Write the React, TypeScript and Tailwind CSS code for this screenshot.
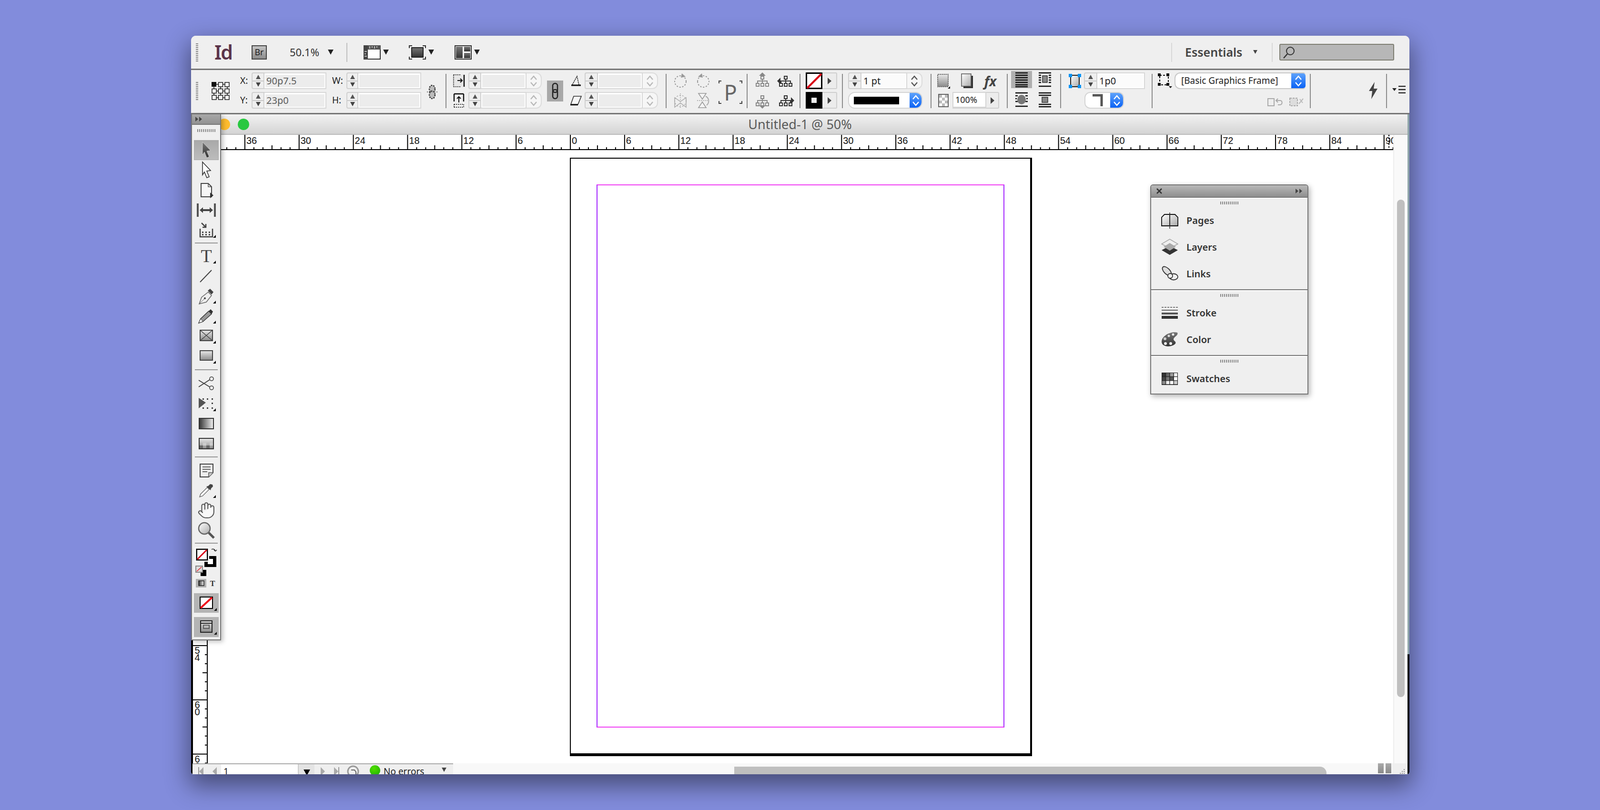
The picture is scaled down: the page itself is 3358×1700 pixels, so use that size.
import { Hand } from 'lucide-react';
import type { ReactNode } from 'react';

const grip = "bg-[repeating-linear-gradient(90deg,#8a8a8a_0_2px,transparent_2px_4px)]";
const gripV = "bg-[repeating-linear-gradient(180deg,#8a8a8a_0_2px,transparent_2px_4px)]";
const step = 113.85;

function Defs() {
  return (
    <svg className="absolute h-0 w-0">
      <defs>
        <linearGradient id="gv" x1="0" y1="0" x2="0" y2="1">
          <stop offset="0" stopColor="#e8e8e8" />
          <stop offset="1" stopColor="#8a8a8a" />
        </linearGradient>
        <linearGradient id="gd" x1="0" y1="0" x2="0" y2="1">
          <stop offset="0" stopColor="#777" />
          <stop offset="1" stopColor="#333" />
        </linearGradient>
        <linearGradient id="gh" x1="0" y1="0" x2="1" y2="0">
          <stop offset="0" stopColor="#333" />
          <stop offset="1" stopColor="#f4f4f4" />
        </linearGradient>
        <linearGradient id="gw" x1="0" y1="0" x2="1" y2="1">
          <stop offset="0" stopColor="#fff" />
          <stop offset="1" stopColor="#aaa" />
        </linearGradient>
      </defs>
    </svg>
  );
}

const Cnr = () => <path d="M42 30v6h-6z" fill="#111" />;

function ToolIcon({ children }: { children: ReactNode }) {
  return (
    <svg width="44" height="40" viewBox="0 0 44 40">
      {children}
    </svg>
  );
}

const arrowPath = "M14 3l17 18-8 1 5 12-5 2-5-12-4 6z";

const toolsA: ReactNode[] = [
  <ToolIcon><path d={arrowPath} fill="url(#gd)" stroke="#fff" strokeWidth=".5" /></ToolIcon>,
  <ToolIcon><path d={arrowPath} fill="#fff" stroke="#333" strokeWidth="1.6" /></ToolIcon>,
  <ToolIcon>
    <path d="M11 6h15l7 7v21H11z" fill="#f6f6f6" stroke="#444" strokeWidth="2" />
    <path d="M26 6v7h7" fill="none" stroke="#555" strokeWidth="1.5" />
    <path d="M30 25l7 6-7 6z" fill="#333" />
  </ToolIcon>,
  <ToolIcon>
    <rect x="2" y="6" width="4" height="28" fill="#555" />
    <rect x="38" y="6" width="4" height="28" fill="#555" />
    <path d="M8 20l7-6v4h14v-4l7 6-7 6v-4H15v4z" fill="#444" />
  </ToolIcon>,
  <ToolIcon>
    <path d="M9 17v17h26V17" fill="none" stroke="#444" strokeWidth="2.5" />
    <path d="M13 23h3v3h-3zM20 23h3v3h-3zM27 23h3v3h-3zM13 28h3v3h-3zM20 28h3v3h-3zM27 28h3v3h-3z" fill="#444" />
    <path d="M12 5l9 9m0-7v7h-7" fill="none" stroke="#444" strokeWidth="2.5" />
    <Cnr />
  </ToolIcon>,
];

const toolsB: ReactNode[] = [
  <ToolIcon>
    <text x="22" y="33" textAnchor="middle" fontFamily="'Liberation Serif', serif" fontSize="38" fill="#444">T</text>
    <Cnr />
  </ToolIcon>,
  <ToolIcon><path d="M9 33L33 8" stroke="#444" strokeWidth="2" /></ToolIcon>,
  <ToolIcon>
    <path d="M7 37l5-14 14-11 7 7-11 14z" fill="#eee" stroke="#666" strokeWidth="1.5" />
    <path d="M25 9l5-4 7 7-4 5z" fill="#444" />
    <path d="M7 37l11-11" stroke="#666" strokeWidth="1" />
    <circle cx="19" cy="25" r="2" fill="#444" />
    <Cnr />
  </ToolIcon>,
  <ToolIcon>
    <path d="M6 35l4-9 17-16 6 6-18 16z" fill="#999" stroke="#333" strokeWidth="1.4" />
    <path d="M6 35l4-9 5 6z" fill="#fff" stroke="#333" strokeWidth="1" />
    <path d="M27 10l4-4 5 5-3 5z" fill="#333" />
    <Cnr />
  </ToolIcon>,
  <ToolIcon>
    <rect x="9" y="8" width="26" height="22" fill="url(#gv)" stroke="#444" strokeWidth="2" />
    <path d="M9 8l26 22M35 8L9 30" stroke="#444" strokeWidth="1.5" />
    <Cnr />
  </ToolIcon>,
  <ToolIcon>
    <rect x="9" y="9" width="26" height="20" fill="url(#gv)" stroke="#444" strokeWidth="2" />
    <Cnr />
  </ToolIcon>,
];

const toolsC: ReactNode[] = [
  <ToolIcon>
    <circle cx="33" cy="10" r="4" fill="none" stroke="#444" strokeWidth="1.6" />
    <circle cx="33" cy="29" r="4" fill="none" stroke="#444" strokeWidth="1.6" />
    <path d="M29 12L6 27M29 27L6 13" stroke="#444" strokeWidth="2" />
  </ToolIcon>,
  <ToolIcon>
    <path d="M6 8l15 10L6 30z" fill="#555" />
    <path d="M14 9h3v3h-3zM23 9h3v3h-3zM33 9h3v3h-3zM33 18h3v3h-3zM33 28h3v3h-3zM23 28h3v3h-3zM14 28h3v3h-3z" fill="#444" />
    <Cnr />
  </ToolIcon>,
  <ToolIcon><rect x="7" y="9" width="30" height="22" fill="url(#gh)" stroke="#333" strokeWidth="2" /></ToolIcon>,
  <ToolIcon>
    <rect x="7" y="9" width="30" height="22" fill="url(#gv)" stroke="#333" strokeWidth="2" />
    <path d="M8 24h7v6H8zM22 24h7v6h-7z" fill="#666" />
    <path d="M15 18h7v6h-7zM29 18h7v6h-7z" fill="#ccc" />
  </ToolIcon>,
];

const toolsD: ReactNode[] = [
  <ToolIcon>
    <path d="M9 7h27v18l-9 9H9z" fill="#eee" stroke="#444" strokeWidth="2" />
    <path d="M14 13h17M14 18h17M14 23h10" stroke="#666" strokeWidth="1.8" />
    <path d="M27 34v-9h9" fill="#ccc" stroke="#555" strokeWidth="1.5" />
  </ToolIcon>,
  <ToolIcon>
    <path d="M8 34l2-6 14-14 4 4-14 14z" fill="#fff" stroke="#666" strokeWidth="1.4" />
    <path d="M22 12l4-1 4-4 5 1 1 4-4 4-1 4z" fill="#444" />
    <Cnr />
  </ToolIcon>,
  <Hand size={38} strokeWidth={1.3} color="#555" fill="#f8f8f8" />,
  <ToolIcon>
    <path d="M27 25l11 11" stroke="#555" strokeWidth="5" />
    <circle cx="18" cy="16" r="12" fill="url(#gw)" stroke="#666" strokeWidth="2.5" />
  </ToolIcon>,
];

function ToolRow({ children, active }: { children: ReactNode; active?: boolean }) {
  return (
    <div className={`mx-auto flex h-[42px] w-[52px] items-center justify-center ${active ? 'border border-[#aaa] bg-[linear-gradient(#a9a9a9,#bcbcbc)]' : ''}`}>
      {children}
    </div>
  );
}

const ToolSep = ({ h }: { h: string }) => (
  <div className={`flex items-center justify-center ${h}`}>
    <div className="h-[2px] w-[48px] bg-[#999]" />
  </div>
);

function FillBlock() {
  return (
    <svg width="52" height="92" viewBox="0 0 52 92" className="mx-auto">
      <rect x="22" y="21" width="25" height="23" fill="#000" />
      <rect x="29" y="27" width="11" height="11" fill="#fff" />
      <rect x="2" y="3" width="30" height="30" fill="#fff" />
      <rect x="4" y="5" width="26" height="26" fill="#888" />
      <rect x="6" y="7" width="22" height="22" fill="#fff" stroke="#000" strokeWidth="2" />
      <path d="M7 28L27 8" stroke="#d80818" strokeWidth="3" />
      <path d="M37 7c4-2 7 0 8 4m0 0l3-3m-3 3l-3-3" fill="none" stroke="#333" strokeWidth="1.6" />
      <rect x="14" y="50" width="12" height="13" fill="#000" />
      <rect x="4" y="42" width="14" height="13" fill="#ddd" stroke="#888" strokeWidth="2" />
      <path d="M6 53l10-9" stroke="#e8202c" strokeWidth="1.6" />
      <rect x="4" y="69" width="22" height="18" fill="#b2b2b2" />
      <rect x="10" y="73" width="11" height="10" fill="url(#gh)" stroke="#222" strokeWidth="1.5" />
      <text x="39" y="84" textAnchor="middle" fontFamily="'Liberation Serif', serif" fontWeight="700" fontSize="16" fill="#333">T</text>
    </svg>
  );
}

function ToolPanel() {
  return (
    <div className="absolute top-0 left-0 z-10 flex h-[1104px] w-[63px] flex-col border-x-2 border-b-2 border-[#777] bg-[#efefef] shadow-[4px_3px_9px_rgba(0,0,0,0.25)]">
      <div className="flex h-[22px] items-center border-b-2 border-[#777] bg-[linear-gradient(#a8a8a8,#929292)] pl-[6px]">
        <svg width="16" height="10" viewBox="0 0 16 10"><path d="M1 0l6 5-6 5zM9 0l6 5-6 5z" fill="#444" /></svg>
      </div>
      <div className="flex h-[32px] items-start justify-center pt-[9px]">
        <div className={`h-[6px] w-[38px] ${grip}`} />
      </div>
      {toolsA.map((t, i) => <ToolRow key={i} active={i === 0}>{t}</ToolRow>)}
      <ToolSep h="h-[12px]" />
      {toolsB.map((t, i) => <ToolRow key={i}>{t}</ToolRow>)}
      <ToolSep h="h-[16px]" />
      {toolsC.map((t, i) => <ToolRow key={i}>{t}</ToolRow>)}
      <ToolSep h="h-[14px]" />
      {toolsD.map((t, i) => <ToolRow key={i}>{t}</ToolRow>)}
      <ToolSep h="h-[12px]" />
      <FillBlock />
      <div className="mx-auto mt-[7px] flex h-[41px] w-[52px] items-center justify-center bg-[#b4b4b4]">
        <svg width="44" height="36" viewBox="0 0 44 36">
          <rect x="9" y="5" width="26" height="24" fill="#fff" stroke="#000" strokeWidth="2" />
          <path d="M10 28L34 6" stroke="#f0101c" strokeWidth="4" />
          <path d="M44 28v6h-6z" fill="#111" />
        </svg>
      </div>
      <div className="mx-auto mt-[9px] flex h-[42px] w-[52px] items-center justify-center bg-[#b4b4b4]">
        <svg width="44" height="36" viewBox="0 0 44 36">
          <rect x="10" y="5" width="24" height="24" fill="url(#gv)" stroke="#222" strokeWidth="2" />
          <path d="M10 10h24" stroke="#222" strokeWidth="2" />
          <rect x="16" y="14" width="12" height="7" fill="none" stroke="#444" strokeWidth="1.5" />
          <path d="M44 28v6h-6z" fill="#111" />
        </svg>
      </div>
    </div>
  );
}

function Stepper({ w }: { w: string }) {
  return (
    <div className={`flex h-full flex-col items-center justify-between rounded-l-[4px] border-2 border-[#d0d0d0] py-[3px] ${w}`}>
      <svg width="12" height="9" viewBox="0 0 12 9"><path d="M6 0l5 9H1z" fill="#555" /></svg>
      <div className="h-[2px] w-full bg-[#c8c8c8]" />
      <svg width="12" height="9" viewBox="0 0 12 9"><path d="M1 0h10L6 9z" fill="#444" /></svg>
    </div>
  );
}

function Spin({ color = '#b0b0b0' }: { color?: string }) {
  return (
    <svg width="16" height="26" viewBox="0 0 16 26">
      <path d="M2 10l6-7 6 7M2 16l6 7 6-7" fill="none" stroke={color} strokeWidth="2.4" />
    </svg>
  );
}

function Num({ stepW, w, value, spin, live, spinDark }: { stepW: string; w: string; value?: string; spin?: boolean; live?: boolean; spinDark?: boolean }) {
  return (
    <div className="flex h-[35px]">
      <Stepper w={stepW} />
      <div className={`flex h-full items-center border-2 border-l-0 border-[#d8d8d8] bg-white px-[2px] ${w}`}>
        <div className={`flex h-[26px] w-full items-center pl-[2px] text-[20px] ${live ? 'bg-[#fbfbfb] text-[#222]' : 'bg-[#ececec] text-[#5c5c5c]'}`}>{value}</div>
      </div>
      {spin && (
        <div className="flex h-full w-[32px] items-center justify-center rounded-r-[12px] border-2 border-l-0 border-[#dcdcdc] bg-[#f6f6f6]">
          <Spin color={spinDark ? '#555' : '#b8b8b8'} />
        </div>
      )}
    </div>
  );
}

const Sep = ({ ml }: { ml: string }) => <div className={`mt-[3px] h-[72px] w-[2px] bg-[#8c8c8c] ${ml}`} />;

function Rows({ ml, w, children }: { ml: string; w: string; children: ReactNode }) {
  return <div className={`flex h-[76px] flex-col gap-[6px] ${ml} ${w}`}>{children}</div>;
}

function Lbl({ w, children }: { w: string; children: ReactNode }) {
  return <div className={`flex h-[35px] items-center text-[19px] text-[#222] ${w}`}>{children}</div>;
}

function Icon({ w, children }: { w: string; children: ReactNode }) {
  return <div className={`flex h-[35px] items-center justify-center ${w}`}>{children}</div>;
}

function Org({ color, arrow }: { color: string; arrow: 'up' | 'down' | 'left' | 'right' }) {
  const tri = { up: 'M18 0l7 7H11z', down: 'M11 28h14l-7 7z', left: 'M0 18l7-7v14z', right: 'M36 18l-7-7v14z' }[arrow];
  return (
    <svg width="36" height="36" viewBox="0 0 36 36">
      <path d={tri} fill={color} />
      <path d="M15 8h6v6h-6zM18 14v4M8 22v-4h20v4M18 18v4" fill="none" stroke={color} strokeWidth="2" />
      <path d="M5 23h6v6H5zM15 23h6v6h-6zM25 23h6v6h-6z" fill="#fff" stroke={color} strokeWidth="2" />
    </svg>
  );
}

function RotIcon({ flip }: { flip?: boolean }) {
  return (
    <svg width="30" height="32" viewBox="0 0 30 32" className={flip ? '-scale-x-100' : ''}>
      <circle cx="15" cy="17" r="12" fill="none" stroke="#999" strokeWidth="2" strokeDasharray="3 3" />
      <path d="M18 0l8 7-10 2z" fill="#999" />
    </svg>
  );
}

function Wrap({ kind }: { kind: number }) {
  return (
    <svg width="32" height="34" viewBox="0 0 32 34">
      {kind === 0 && (
        <path d="M3 3h26M3 8h26M3 13h26M3 18h26M3 23h26M3 28h26M3 32h26" stroke="#111" strokeWidth="2.4" />
      )}
      {kind === 1 && (
        <>
          <path d="M3 3h26M3 31h26" stroke="#111" strokeWidth="2.4" />
          <path d="M3 8h5M3 13h5M3 18h5M3 23h5M24 8h5M24 13h5M24 18h5M24 23h5" stroke="#111" strokeWidth="2.4" />
          <rect x="11" y="9" width="10" height="14" fill="#888" stroke="#333" strokeWidth="1.5" />
        </>
      )}
      {kind === 2 && (
        <>
          <path d="M3 3h26M3 31h26" stroke="#111" strokeWidth="2.4" />
          <path d="M3 9h5M3 15h3M3 21h5M24 9h5M26 15h3M24 21h5" stroke="#111" strokeWidth="2.4" />
          <ellipse cx="16" cy="17" rx="9" ry="10" fill="#777" />
        </>
      )}
      {kind === 3 && (
        <>
          <path d="M3 3h26M3 8h26M3 27h26M3 32h26" stroke="#111" strokeWidth="2.4" />
          <rect x="10" y="12" width="12" height="11" fill="#888" stroke="#333" strokeWidth="1.5" />
        </>
      )}
    </svg>
  );
}

function ArrowBtn() {
  return (
    <div className="flex h-full w-[31px] items-center justify-center rounded-r-[3px] border-2 border-l-0 border-[#cfcfcf] bg-[#ececec]">
      <svg width="8" height="14" viewBox="0 0 8 14"><path d="M0 0l8 7-8 7z" fill="#444" /></svg>
    </div>
  );
}

function ControlBar() {
  return (
    <div className="flex h-[93px] border-b-[3px] border-[#777] bg-[#efefef] pt-[5px]">
      <div className={`mt-[20px] ml-[10px] h-[38px] w-[5px] ${gripV}`} />
      <div className="mt-[20px] ml-[28px]">
        <svg width="38" height="38" viewBox="0 0 38 38">
          <path d="M9 5h20M9 19h20M9 33h20M5 9v20M19 9v20M33 9v20" stroke="#222" strokeWidth="1.6" />
          <rect x="0" y="0" width="10" height="10" fill="#111" />
          {[[14.500, 1], [28, 1], [1, 14.500], [14.500, 14.500], [28, 14.500], [1, 28], [14.500, 28], [28, 28]].map(([x, y]) => (
            <rect key={`${x}-${y}`} x={x} y={y} width="9" height="9" fill="#f4f4f4" stroke="#111" strokeWidth="1.4" />
          ))}
        </svg>
      </div>
      <Rows ml="ml-[22px]" w="w-[181px]">
        <div className="flex"><Lbl w="w-[24px]">X:</Lbl><Num stepW="w-[27px]" w="w-[130px]" value="90p7.5" /></div>
        <div className="flex"><Lbl w="w-[24px]">Y:</Lbl><Num stepW="w-[27px]" w="w-[130px]" value="23p0" /></div>
      </Rows>
      <Rows ml="ml-[12px]" w="w-[187px]">
        <div className="flex"><Lbl w="w-[30px]">W:</Lbl><Num stepW="w-[25px]" w="w-[132px]" /></div>
        <div className="flex"><Lbl w="w-[30px]">H:</Lbl><Num stepW="w-[25px]" w="w-[132px]" /></div>
      </Rows>
      <div className="ml-[9px] flex h-[76px] w-[28px] items-center justify-center pt-[6px]">
        <svg width="26" height="30" viewBox="0 0 26 30">
          <ellipse cx="13" cy="9" rx="6" ry="8" fill="#bbb" stroke="#333" strokeWidth="2.4" strokeDasharray="3 2" />
          <ellipse cx="13" cy="21" rx="6" ry="8" fill="#bbb" stroke="#333" strokeWidth="2.4" strokeDasharray="3 2" />
          <path d="M2 15h22" stroke="#777" strokeWidth="2" strokeDasharray="2 2" />
        </svg>
      </div>
      <Sep ml="ml-[14px]" />
      <Rows ml="ml-[6px]" w="w-[194px]">
        <div className="flex">
          <Icon w="w-[40px]">
            <svg width="28" height="30" viewBox="0 0 28 30">
              <rect x="1" y="1" width="26" height="27" fill="#e6e6e6" />
              <path d="M3 2h15M3 27h15M3 2v25" stroke="#333" strokeWidth="2" strokeDasharray="2 2" />
              <path d="M25 2v25" stroke="#111" strokeWidth="2.5" />
              <path d="M11 14h10m-4-4l4 4-4 4" fill="none" stroke="#111" strokeWidth="2" />
            </svg>
          </Icon>
          <Num stepW="w-[27px]" w="w-[95px]" spin />
        </div>
        <div className="flex">
          <Icon w="w-[40px]">
            <svg width="24" height="32" viewBox="0 0 24 32">
              <path d="M2 2h20M2 2v16M22 2v16" stroke="#111" strokeWidth="2.4" />
              <path d="M12 20V8m-4 4l4-4 4 4" fill="none" stroke="#111" strokeWidth="2" />
              <path d="M2 24h20M2 30h20M2 24v6M22 24v6" stroke="#333" strokeWidth="2" strokeDasharray="2 2" />
            </svg>
          </Icon>
          <Num stepW="w-[27px]" w="w-[95px]" spin />
        </div>
      </Rows>
      <div className="mt-[17px] ml-[11px] flex h-[44px] w-[34px] items-center justify-center bg-[#a8a8a8]">
        <svg width="18" height="36" viewBox="0 0 18 36">
          <rect x="4" y="2" width="10" height="19" rx="5" fill="none" stroke="#222" strokeWidth="2.5" />
          <rect x="4" y="15" width="10" height="19" rx="5" fill="none" stroke="#222" strokeWidth="2.5" />
        </svg>
      </div>
      <Rows ml="ml-[8px]" w="w-[191px]">
        <div className="flex">
          <Icon w="w-[37px]">
            <svg width="24" height="26" viewBox="0 0 24 26">
              <path d="M2 22h20" stroke="#111" strokeWidth="3" />
              <path d="M4 21L14 3l4 18" fill="none" stroke="#333" strokeWidth="1.6" strokeDasharray="3 1" />
            </svg>
          </Icon>
          <Num stepW="w-[28px]" w="w-[94px]" spin />
        </div>
        <div className="flex">
          <Icon w="w-[37px]">
            <svg width="26" height="22" viewBox="0 0 26 22">
              <path d="M8 2h16l-7 17H2z" fill="#f6f6f6" stroke="#333" strokeWidth="1.6" />
              <path d="M1 20h16" stroke="#111" strokeWidth="2.5" />
            </svg>
          </Icon>
          <Num stepW="w-[28px]" w="w-[94px]" spin />
        </div>
      </Rows>
      <Sep ml="ml-[16px]" />
      <div className="ml-[5px] grid h-[76px] w-[96px] grid-cols-2 gap-y-[6px]">
        <Icon w="w-[48px]"><RotIcon /></Icon>
        <Icon w="w-[48px]"><RotIcon flip /></Icon>
        <Icon w="w-[48px]">
          <svg width="30" height="32" viewBox="0 0 30 32">
            <path d="M3 10l12 8 12-8v20l-12-9-12 9z" fill="#eee" stroke="#aaa" strokeWidth="1.5" />
            <path d="M15 1v30" stroke="#aaa" strokeWidth="1.5" strokeDasharray="2 2" />
            <circle cx="15" cy="17" r="12" fill="none" stroke="#aaa" strokeWidth="1.5" strokeDasharray="3 3" />
          </svg>
        </Icon>
        <Icon w="w-[48px]">
          <svg width="30" height="34" viewBox="0 0 30 34">
            <path d="M5 2h16l-8 12zM5 32h16l-8-12z" fill="#f4f4f4" stroke="#999" strokeWidth="1.6" />
            <path d="M2 17h22" stroke="#999" strokeWidth="1.6" strokeDasharray="2 2" />
            <path d="M20 8c8 4 8 14 2 19" fill="none" stroke="#aaa" strokeWidth="2" />
          </svg>
        </Icon>
      </div>
      <div className="mt-[17px] ml-[8px] w-[50px]">
        <div className="relative flex h-[49px] items-center justify-center">
          <div className="absolute top-0 left-0 h-[6px] w-[6px] border-t-2 border-l-2 border-[#444]" />
          <div className="absolute top-0 right-0 h-[6px] w-[6px] border-t-2 border-r-2 border-[#444]" />
          <div className="absolute bottom-0 left-0 h-[6px] w-[6px] border-b-2 border-l-2 border-[#444]" />
          <div className="absolute right-0 bottom-0 h-[6px] w-[6px] border-r-2 border-b-2 border-[#444]" />
          <span className="font-['Liberation_Serif',serif] text-[45px] leading-none text-[#666]">P</span>
        </div>
      </div>
      <Sep ml="ml-[9px]" />
      <div className="ml-[6px] grid h-[76px] w-[98px] grid-cols-2 gap-y-[6px]">
        <Icon w="w-[49px]"><Org color="#888" arrow="up" /></Icon>
        <Icon w="w-[49px]"><Org color="#333" arrow="left" /></Icon>
        <Icon w="w-[49px]"><Org color="#888" arrow="down" /></Icon>
        <Icon w="w-[49px]"><Org color="#333" arrow="right" /></Icon>
      </div>
      <Sep ml="ml-[5px]" />
      <Rows ml="ml-[11px]" w="w-[66px]">
        <div className="flex h-[35px]">
          <div className="h-full w-[35px]">
            <svg width="35" height="35" viewBox="0 0 35 35">
              <rect x="1.5" y="1.5" width="32" height="32" fill="#fff" stroke="#000" strokeWidth="3" />
              <path d="M3 33L33 3" stroke="#d80818" strokeWidth="4" />
            </svg>
          </div>
          <ArrowBtn />
        </div>
        <div className="flex h-[35px]">
          <div className="flex h-full w-[35px] items-center justify-center bg-black">
            <div className="h-[11px] w-[11px] bg-[#eee]" />
          </div>
          <ArrowBtn />
        </div>
      </Rows>
      <Sep ml="ml-[10px]" />
      <Rows ml="ml-[11px]" w="w-[156px]">
        <Num stepW="w-[28px]" w="w-[96px]" value="1 pt" spin spinDark live />
        <div className="flex h-[35px] rounded-[14px] border-2 border-[#d4d4d4] bg-white">
          <div className="flex flex-1 items-center pl-[10px]">
            <div className="h-[16px] w-[95px] bg-black" />
          </div>
          <div className="flex w-[25px] items-center justify-center rounded-r-[12px] bg-[linear-gradient(#5ea2fb,#0a62f5)]">
            <Spin color="#fff" />
          </div>
        </div>
      </Rows>
      <Sep ml="ml-[17px]" />
      <Rows ml="ml-[5px]" w="w-[137px]">
        <div className="flex h-[35px]">
          <Icon w="w-[38px]">
            <svg width="30" height="34" viewBox="0 0 30 34">
              <rect x="4" y="3" width="22" height="26" fill="url(#gv)" stroke="#777" strokeWidth="2" strokeDasharray="3 1" />
              <path d="M30 28v5h-5z" fill="#111" />
            </svg>
          </Icon>
          <Icon w="w-[62px]">
            <svg width="30" height="34" viewBox="0 0 30 34">
              <rect x="8" y="6" width="20" height="26" fill="#333" />
              <rect x="4" y="2" width="20" height="26" fill="url(#gw)" stroke="#555" strokeWidth="1.5" />
            </svg>
          </Icon>
          <div className="flex h-[35px] w-[37px] items-center justify-center font-['Liberation_Serif',serif] text-[28px] font-bold text-[#444] italic">fx</div>
        </div>
        <div className="flex h-[35px]">
          <Icon w="w-[39px]">
            <svg width="22" height="28" viewBox="0 0 22 28">
              <rect x="1" y="1" width="20" height="26" fill="#fff" stroke="#666" strokeWidth="2" />
              <path d="M2 2h6v6H2zM14 2h6v6h-6zM8 8h6v6H8zM2 14h6v6H2zM14 14h6v6h-6zM8 20h6v6H8z" fill="#bbb" />
            </svg>
          </Icon>
          <div className="flex h-full w-[71px] items-center border-2 border-b-4 border-[#d4d4d4] bg-white pl-[4px] text-[18px] text-[#222]">100%</div>
          <div className="flex h-full w-[27px] items-center justify-center rounded-r-[3px] border-2 border-l-0 border-[#cfcfcf] bg-[#ececec]">
            <svg width="8" height="14" viewBox="0 0 8 14"><path d="M0 0l8 7-8 7z" fill="#444" /></svg>
          </div>
        </div>
      </Rows>
      <Sep ml="ml-[16px]" />
      <div className="-mt-[3px] ml-[7px] grid h-[78px] w-[93px] grid-cols-[49px_44px] gap-y-[6px]">
        <div className="flex h-[36px] w-[44px] items-center justify-center bg-[#b0b0b0]"><Wrap kind={0} /></div>
        <div className="flex h-[36px] w-[44px] items-center justify-center"><Wrap kind={1} /></div>
        <div className="flex h-[36px] w-[44px] items-center justify-center"><Wrap kind={2} /></div>
        <div className="flex h-[36px] w-[44px] items-center justify-center"><Wrap kind={3} /></div>
      </div>
      <Sep ml="ml-[10px]" />
      <Rows ml="ml-[10px]" w="w-[166px]">
        <div className="flex">
          <Icon w="w-[38px]">
            <svg width="28" height="32" viewBox="0 0 28 32">
              <rect x="5" y="4" width="18" height="24" fill="url(#gw)" stroke="#222" strokeWidth="2" />
              <path d="M1 1h7v7H1zM20 1h7v7h-7zM1 24h7v7H1zM20 24h7v7h-7z" fill="#0a94f5" />
            </svg>
          </Icon>
          <Num stepW="w-[28px]" w="w-[100px]" value="1p0" live />
        </div>
        <div className="ml-[39px] flex h-[35px] w-[83px] rounded-[12px] border-2 border-[#d4d4d4] bg-white">
          <div className="flex flex-1 items-center justify-center">
            <svg width="24" height="28" viewBox="0 0 24 28"><path d="M1 3h19v23" fill="none" stroke="#555" strokeWidth="5" /></svg>
          </div>
          <div className="flex w-[27px] items-center justify-center rounded-r-[10px] bg-[linear-gradient(#5ea2fb,#0a62f5)]">
            <Spin color="#fff" />
          </div>
        </div>
      </Rows>
      <Sep ml="ml-[14px]" />
      <Rows ml="ml-[6px]" w="w-[315px]">
        <div className="flex h-[35px]">
          <Icon w="w-[40px]">
            <svg width="30" height="32" viewBox="0 0 30 32">
              <rect x="4" y="4" width="18" height="20" fill="#f4f4f4" stroke="#111" strokeWidth="2" strokeDasharray="4 3" />
              <path d="M0 0h6v6H0zM18 0h6v6h-6zM0 20h6v6H0zM18 20h6v6h-6z" fill="#111" />
              <path d="M23 27h7l-3.500 4z" fill="#111" />
            </svg>
          </Icon>
          <div className="flex h-[35px] w-[275px] rounded-l-[12px] rounded-r-[5px] border-2 border-r-0 border-[#c8c8c8] bg-white">
            <div className="flex flex-1 items-center pl-[12px] text-[19px] text-[#222]">[Basic Graphics Frame]</div>
            <div className="flex w-[30px] items-center justify-center rounded-r-[5px] bg-[linear-gradient(#5ea2fb,#0a62f5)]">
              <Spin color="#fff" />
            </div>
          </div>
        </div>
        <div className="flex h-[35px] items-end justify-end gap-[14px] pr-[2px] pb-[4px]">
          <svg width="32" height="20" viewBox="0 0 32 20">
            <rect x="1" y="3" width="13" height="15" fill="#eee" stroke="#aaa" strokeWidth="2" />
            <path d="M19 7h8c5 0 5 9-1 9h-4M22 3l-4 4 4 4" fill="none" stroke="#aaa" strokeWidth="2" />
          </svg>
          <svg width="32" height="20" viewBox="0 0 32 20">
            <rect x="1" y="2" width="16" height="16" fill="#ddd" stroke="#aaa" strokeWidth="2" strokeDasharray="4 2" />
            <path d="M20 14l9-11M22 4l6 8" stroke="#bbb" strokeWidth="2" />
          </svg>
        </div>
      </Rows>
      <Sep ml="ml-[9px]" />
      <div className="ml-[116px] flex h-[76px] w-[30px] items-center justify-center">
        <svg width="22" height="36" viewBox="0 0 22 36">
          <path d="M14 0L2 19h7L7 36l13-22h-8z" fill="#444" />
        </svg>
      </div>
      <Sep ml="ml-[12px]" />
      <div className="ml-[11px] flex h-[72px] w-[30px] items-center justify-center">
        <svg width="30" height="16" viewBox="0 0 30 16">
          <path d="M0 5h9L4.500 11z" fill="#222" />
          <path d="M13 1h15M13 8h15M13 15h15" stroke="#222" strokeWidth="2.4" />
        </svg>
      </div>
    </div>
  );
}

function ArrowDown({ size = 12, color = '#222' }: { size?: number; color?: string }) {
  return (
    <svg width={size} height={size * 0.9} viewBox="0 0 12 11"><path d="M0 0h12L6 11z" fill={color} /></svg>
  );
}

function AppBar() {
  return (
    <div className="flex h-[72px] items-center border-b-[3px] border-[#777] bg-[#efefef]">
      <div className={`ml-[10px] h-[38px] w-[5px] ${gripV}`} />
      <div className="ml-[34px] w-[34px] font-['Open_Sans',sans-serif] text-[41px] leading-none font-semibold tracking-[-2px] text-[#5a3349]">Id</div>
      <div className="ml-[44px] flex h-[30px] w-[32px] items-center justify-center border-2 border-[#444] bg-[linear-gradient(#c4c4c4,#8c8c8c)] text-[18px] text-[#222]">Br</div>
      <div className="ml-[48px] w-[62px] text-[22px] text-[#333]">50.1%</div>
      <div className="ml-[18px]"><ArrowDown /></div>
      <div className="ml-[27px] h-[40px] w-[2px] bg-[#c0c0c0]" />
      <svg className="ml-[34px]" width="36" height="30" viewBox="0 0 36 30">
        <rect x="1" y="1" width="34" height="28" fill="#fff" stroke="#333" strokeWidth="2" />
        <rect x="0" y="0" width="36" height="9" fill="#555" />
        <rect x="0" y="0" width="9" height="30" fill="#444" />
        <path d="M13 2v5M18 2v3M23 2v5M28 2v3M2 13h5M2 18h3M2 23h5" stroke="#ddd" strokeWidth="1.5" />
      </svg>
      <div className="ml-[5px]"><ArrowDown /></div>
      <svg className="ml-[42px]" width="36" height="30" viewBox="0 0 36 30">
        <path d="M1 6V1h6M29 1h6v5M1 24v5h6M29 29h6v-5" fill="none" stroke="#333" strokeWidth="2" />
        <rect x="6" y="5" width="24" height="20" fill="url(#gd)" stroke="#222" strokeWidth="2" />
      </svg>
      <div className="ml-[5px]"><ArrowDown /></div>
      <svg className="ml-[43px]" width="36" height="30" viewBox="0 0 36 30">
        <rect x="1" y="1" width="34" height="28" fill="#fff" stroke="#333" strokeWidth="2" />
        <rect x="3" y="3" width="14" height="24" fill="url(#gd)" />
        <rect x="20" y="3" width="13" height="10" fill="url(#gd)" />
        <rect x="20" y="16" width="13" height="11" fill="url(#gd)" />
      </svg>
      <div className="ml-[5px]"><ArrowDown /></div>
      <div className="flex-1" />
      <div className="h-[40px] w-[2px] bg-[#d8d8d8]" />
      <div className="ml-[27px] w-[125px] font-['Open_Sans',sans-serif] text-[25px] font-semibold text-[#444]">Essentials</div>
      <div className="ml-[18px]"><ArrowDown size={9} color="#444" /></div>
      <div className="ml-[30px] h-[40px] w-[2px] bg-[#d8d8d8]" />
      <div className="mr-[32px] ml-[14px] flex h-[35px] w-[241px] items-center rounded-[3px] border-2 border-[#7f7f73] bg-[#b7b7b7] pl-[5px]">
        <svg width="26" height="26" viewBox="0 0 26 26">
          <circle cx="16" cy="10" r="8" fill="none" stroke="#333" strokeWidth="2" />
          <path d="M10 16L2 25" stroke="#333" strokeWidth="2.5" />
        </svg>
      </div>
    </div>
  );
}

function RulerH() {
  const origin = 793;
  const majors = Array.from({ length: 23 }, (_, i) => i - 7);
  return (
    <svg width="2520" height="32" viewBox="0 0 2520 32" className="block bg-white">
      {majors.map((k) => {
        const x = origin + k * step;
        return (
          <g key={k}>
            <rect x={x - 1} y="0" width="2" height="30" fill="#000" />
            {k >= -6 && (
              <text x={x + 3} y="19" fontSize="20" fill="#111" fontFamily="'Liberation Sans', sans-serif">{Math.abs(k * 6)}</text>
            )}
            {[1, 2, 3, 4, 5].map((i) => (
              <rect key={i} x={x + (i * step) / 6 - 1} y={i === 3 ? 22 : 26} width="2" height={i === 3 ? 8 : 4} fill="#000" />
            ))}
          </g>
        );
      })}
      <path d="M2511 0v30" stroke="#000" strokeWidth="2" strokeDasharray="3 3" />
      <rect x="0" y="30" width="2520" height="2" fill="#000" />
    </svg>
  );
}

function RulerV() {
  const majors = Array.from({ length: 12 }, (_, i) => i);
  return (
    <svg width="32" height="1287" viewBox="0 0 32 1287" className="block shrink-0 bg-white">
      {majors.map((k) => {
        const y = 15.3 + k * step;
        const digits = String(k * 6).split('');
        return (
          <g key={k}>
            <rect x="0" y={y - 1} width="30" height="2" fill="#000" />
            {k >= 9 && (
              <text fontSize="20" fill="#111" textAnchor="middle" fontFamily="'Liberation Sans', sans-serif">
                {digits.map((d, i) => (
                  <tspan key={i} x="10" y={y + 17 + i * 15}>{d}</tspan>
                ))}
              </text>
            )}
            {[1, 2, 3, 4, 5].map((i) => (
              <rect key={i} x={i === 3 ? 21 : 26} y={y + (i * step) / 6 - 1} width={i === 3 ? 9 : 4} height="2" fill="#000" />
            ))}
          </g>
        );
      })}
      <rect x="0" y="0" width="1" height="1287" fill="#000" />
      <rect x="30" y="0" width="2" height="1287" fill="#000" />
    </svg>
  );
}

function PanelGrip({ h }: { h: string }) {
  return (
    <div className={`flex items-start justify-center border-t-2 border-white pt-[6px] ${h}`}>
      <div className={`h-[6px] w-[38px] ${grip}`} />
    </div>
  );
}

function PanelItem({ icon, label }: { icon: ReactNode; label: string }) {
  return (
    <div className="flex h-[56px] items-center pl-[21px]">
      <div className="flex h-[36px] w-[36px] items-center justify-center">{icon}</div>
      <div className="ml-[17px] font-['Open_Sans',sans-serif] text-[20px] font-semibold text-[#333]">{label}</div>
    </div>
  );
}

function PanelIcon({ children }: { children: ReactNode }) {
  return <svg width="36" height="36" viewBox="0 0 36 36">{children}</svg>;
}

const swatchFill = ['#333', '#666', '#999', '#eee', '#444', '#777', '#555', '#fff', '#888', '#eee', '#fff', '#ccc'];

function FloatPanel() {
  return (
    <div className="absolute top-[72px] left-[1978px] z-10 flex h-[441px] w-[332px] flex-col rounded-t-[6px] border-2 border-[#777] bg-[#efefef] shadow-[3px_4px_12px_rgba(0,0,0,0.3)]">
      <div className="flex h-[26px] items-center justify-between rounded-t-[4px] border-b-2 border-[#777] bg-[linear-gradient(#b8b8b8,#8f8f8f)] px-[10px]">
        <svg width="14" height="12" viewBox="0 0 14 12"><path d="M2 1l10 10M12 1L2 11" stroke="#333" strokeWidth="2.6" /></svg>
        <svg width="16" height="12" viewBox="0 0 16 12"><path d="M1 1l6 5-6 5zM9 1l6 5-6 5z" fill="#444" /></svg>
      </div>
      <PanelGrip h="h-[20px]" />
      <PanelItem label="Pages" icon={
        <PanelIcon>
          <path d="M1 29V11l6-6h11v24zM18 5h11l6 6v18H18z" fill="url(#gw)" stroke="#111" strokeWidth="1.8" />
          <path d="M18 1v34" stroke="#333" strokeWidth="1.5" />
        </PanelIcon>
      } />
      <PanelItem label="Layers" icon={
        <PanelIcon>
          <path d="M18 15l17 9-17 10L1 24z" fill="#333" />
          <path d="M18 9l13 8-13 8-13-8z" fill="#aaa" />
          <path d="M18 1l17 10-17 9L1 11z" fill="none" stroke="#aaa" strokeWidth="1.6" />
        </PanelIcon>
      } />
      <PanelItem label="Links" icon={
        <PanelIcon>
          <g fill="none" stroke="#333" strokeWidth="1.8">
            <ellipse cx="12" cy="12" rx="12" ry="6" transform="rotate(45 12 12)" fill="#ddd" />
            <ellipse cx="26" cy="24" rx="9" ry="6.500" />
            <circle cx="19" cy="22" r="5" fill="#eee" />
          </g>
        </PanelIcon>
      } />
      <div className="mt-[4px] h-[2px] bg-[#777]" />
      <PanelGrip h="h-[20px]" />
      <PanelItem label="Stroke" icon={
        <PanelIcon>
          <path d="M1 6h34" stroke="#555" strokeWidth="1.5" strokeDasharray="4 2" />
          <rect x="1" y="11" width="34" height="2" fill="#666" />
          <rect x="1" y="17" width="34" height="4" fill="#555" />
          <rect x="1" y="24" width="34" height="6" fill="#333" />
        </PanelIcon>
      } />
      <PanelItem label="Color" icon={
        <PanelIcon>
          <path d="M1 22C2 8 22 0 34 3c3 6-8 9-8 14 0 4 6 4 4 9-6 8-29 9-29-4z" fill="url(#gd)" />
          <circle cx="16" cy="10" r="2.500" fill="#ddd" />
          <circle cx="25" cy="7" r="2.500" fill="#eee" />
          <circle cx="8" cy="16" r="3" fill="#ccc" />
          <circle cx="9" cy="26" r="3" fill="#eee" />
          <circle cx="20" cy="26" r="3" fill="#eee" />
        </PanelIcon>
      } />
      <div className="mt-[4px] h-[2px] bg-[#777]" />
      <PanelGrip h="h-[20px]" />
      <PanelItem label="Swatches" icon={
        <PanelIcon>
          <rect x="1" y="5" width="34" height="26" fill="#222" />
          {swatchFill.map((c, i) => (
            <rect key={i} x={2 + (i % 4) * 8.300} y={6 + Math.floor(i / 4) * 8.200} width="7" height="7" fill={c} />
          ))}
        </PanelIcon>
      } />
    </div>
  );
}

function Tri({ right, bar }: { right?: boolean; bar?: boolean }) {
  return (
    <svg width="14" height="22" viewBox="0 0 14 22" className={right ? '-scale-x-100' : ''}>
      {bar && <rect x="1" y="2" width="2" height="18" fill="#999" />}
      <path d="M12 2v18L3 11z" fill="#aaa" />
    </svg>
  );
}

function StatusBar() {
  return (
    <div className="flex h-[23px] shrink-0 overflow-hidden bg-[#f8f8f8]">
      <div className="flex h-full w-[547px] items-start overflow-hidden border-t-2 border-[#aaa] bg-[#efefef]">
        <div className="flex h-[30px] w-[60px] items-center justify-around pl-[4px]">
          <Tri bar />
          <Tri />
        </div>
        <div className="flex h-[30px] w-[161px] items-center bg-white pl-[5px] text-[19px] text-[#222]">1</div>
        <div className="flex h-[30px] w-[35px] items-center justify-center border-l-2 border-[#ccc] bg-[#e4e4e4] pt-[4px]"><ArrowDown size={14} color="#000" /></div>
        <div className="ml-[11px] flex h-[30px] items-center gap-[14px]">
          <Tri right />
          <Tri right bar />
        </div>
        <svg className="ml-[15px]" width="26" height="30" viewBox="0 0 26 30">
          <circle cx="13" cy="15" r="11" fill="none" stroke="#999" strokeWidth="3" />
          <path d="M9 12h7l3 4v6" fill="none" stroke="#666" strokeWidth="2" />
        </svg>
        <div className="ml-[22px] h-[22px] w-[22px] translate-y-[2px] rounded-full bg-[radial-gradient(circle_at_40%_30%,#50e000,#1aa800)]" />
        <div className="ml-[7px] flex h-[30px] w-[120px] items-center text-[19px] text-[#222]">No errors</div>
        <div className="mt-[7px] ml-[2px]"><ArrowDown size={10} color="#444" /></div>
      </div>
      <div className="flex h-full flex-1 flex-col">
        <div className="h-[2px] w-[1941px] bg-[#eee]" />
        <div className="flex flex-1 items-start">
          <div className="ml-[590px] h-[30px] w-[1243px] translate-y-[7px] rounded-r-[14px] bg-[#bfbfbf]" />
          <div className="ml-[108px] h-[21px] w-[12px] bg-[linear-gradient(#aaa,#8a8a8a)]" />
          <div className="ml-[4px] h-[21px] w-[12px] bg-[linear-gradient(#aaa,#8a8a8a)]" />
          <div className="ml-[2px] flex h-full flex-1 items-end justify-end overflow-hidden bg-[#efefef] pr-[4px]">
            <svg width="20" height="21" viewBox="0 0 20 21">
              <path d="M16 3h2v2h-2zM16 7h2v2h-2zM12 7h2v2h-2zM16 11h2v2h-2zM12 11h2v2h-2zM8 11h2v2H8zM16 15h2v2h-2zM12 15h2v2h-2zM8 15h2v2H8zM4 15h2v2H4zM16 19h2v2h-2zM12 19h2v2h-2zM8 19h2v2H8zM4 19h2v2H4zM0 19h2v2H0z" fill="#888" />
            </svg>
          </div>
        </div>
      </div>
    </div>
  );
}

export default function App() {
  return (
    <div className="h-[1700px] w-[3358px] overflow-hidden bg-[#828cdc] pt-[75px] pl-[401px] font-['Liberation_Sans',sans-serif]">
      <Defs />
      <div className="flex h-[1550px] w-[2557px] flex-col overflow-hidden rounded-t-[10px] rounded-b-[5px] bg-[#efefef] shadow-[0_20px_50px_5px_rgba(0,0,0,0.45)]">
        <AppBar />
        <ControlBar />
        <div className="relative flex min-h-0 flex-1">
          <ToolPanel />
          <div className="w-[3px] shrink-0 bg-black" />
          <div className="flex min-w-0 flex-1 flex-col rounded-tr-[10px]">
            <div className="flex h-[43px] shrink-0 items-center justify-center rounded-tr-[12px] border-b-2 border-[#bbb] bg-[linear-gradient(#f2f2f2,#d4d4d4)]">
              <div className="absolute top-[9px] left-[58px] h-[24px] w-[24px] rounded-full bg-[#febc2e]" />
              <div className="absolute top-[9px] left-[98px] h-[24px] w-[24px] rounded-full bg-[#28c840]" />
              <div className="text-[27px] leading-none text-[#5a5a5a]">Untitled-1 @ 50%</div>
            </div>
            <div className="flex min-h-0 flex-1">
              <div className="flex w-[2520px] flex-col">
                <RulerH />
                <div className="flex min-h-0 flex-1">
                  <RulerV />
                  <div className="relative flex-1 bg-white">
                    <div className="mt-[16px] ml-[760px] h-[1256px] w-[970px] border-t-2 border-r-4 border-b-[6px] border-l-2 border-black bg-white p-[54px]">
                      <div className="h-full w-full border-2 border-x-[#a428ff] border-y-[#f040f4]" />
                    </div>
                    <FloatPanel />
                  </div>
                </div>
              </div>
              <div className="flex-1 border-l-2 border-[#eee] bg-[#f9f9f9] pt-[136px]">
                <div className="ml-[6px] h-[1044px] w-[16px] rounded-full bg-[#bfbfbf]" />
              </div>
            </div>
            <StatusBar />
          </div>
          <div className="flex w-[4px] shrink-0 flex-col bg-black">
            <div className="h-[1133px] bg-[#8fa5aa]" />
          </div>
        </div>
      </div>
    </div>
  );
}
